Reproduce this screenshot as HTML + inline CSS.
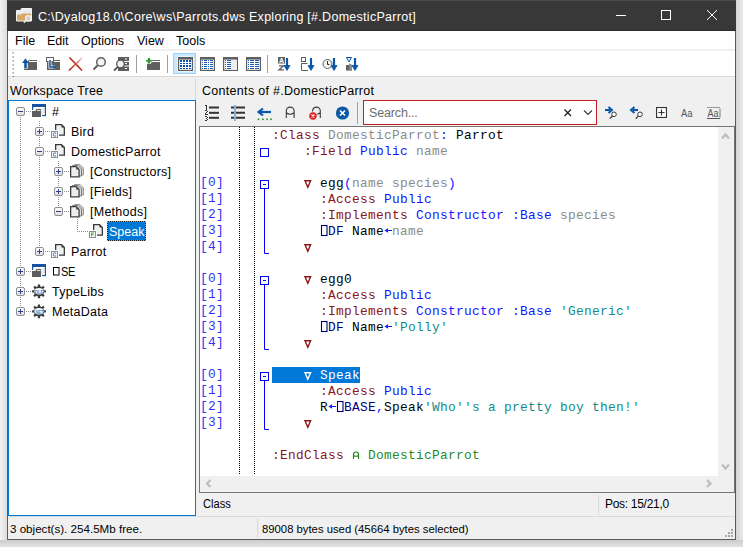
<!DOCTYPE html><html><head><meta charset="utf-8"><style>
*{margin:0;padding:0;box-sizing:border-box}
html,body{width:743px;height:547px;overflow:hidden}
body{position:relative;background:#ececec;font-family:"Liberation Sans",sans-serif;font-size:12.5px;color:#000}
.a{position:absolute}
.t{position:absolute;white-space:pre;line-height:14px;height:14px}
.m{position:absolute;white-space:pre;font-family:"Liberation Mono",monospace;font-size:12.8px;letter-spacing:0.32px;line-height:16px;height:16px}
.kw{color:#8b1515}.gy{color:#8a8a8a}.bl{color:#1414ff}.tl{color:#008080}.nv{color:#00007a}.gr{color:#1f8a1f}.bk{color:#000}
.q{display:inline-block;width:8px;height:16px;position:relative;vertical-align:top}
</style></head><body>
<div class="a" style="left:0;top:0;width:7px;height:547px;background:linear-gradient(to right,#f3f3f3,#dcdcdc)"></div>
<div class="a" style="left:736px;top:0;width:7px;height:547px;background:linear-gradient(to right,#d3d3d3,#e2e2e2 60%,#e8e8e8)"></div>
<div class="a" style="left:0;top:540px;width:743px;height:7px;background:linear-gradient(to bottom,#cbcbcb,#dadada 60%,#e2e2e2)"></div>
<div class="a" style="left:7px;top:0;width:729px;height:540px;background:#f0f0f0;border:1px solid #5a5a5a;border-top:none"></div>
<div class="a" style="left:7px;top:0;width:729px;height:31px;background:#383838;border-top:1px solid #4a4a4a;border-bottom:1px solid #2c2c2c"></div>
<div class="t" style="left:38px;top:10px;color:#fff;letter-spacing:0.28px">C:\Dyalog18.0\Core\ws\Parrots.dws Exploring [#.DomesticParrot]</div>
<div class="a" style="left:8px;top:31px;width:727px;height:18px;background:#fff"></div>
<div class="t" style="left:15px;top:34px">File</div>
<div class="t" style="left:47px;top:34px">Edit</div>
<div class="t" style="left:81px;top:34px">Options</div>
<div class="t" style="left:137px;top:34px">View</div>
<div class="t" style="left:176px;top:34px">Tools</div>
<div class="a" style="left:8px;top:51px;width:727px;height:25px;background:#fff"></div>
<div class="a" style="left:8px;top:76px;width:727px;height:1px;background:#d8d8d8"></div>
<div class="t" style="left:10px;top:84px;letter-spacing:0.17px">Workspace Tree</div>
<div class="t" style="left:202px;top:84px;letter-spacing:0.3px">Contents of #.DomesticParrot</div>
<div class="a" style="left:195px;top:79px;width:1px;height:21px;background:#d9d9d9"></div>
<div class="a" style="left:8px;top:100px;width:188px;height:416px;background:#fff;border:1px solid #0078d7"></div>
<div class="a" style="left:363px;top:100px;width:234px;height:25px;background:#fff;border:1px solid #c01f24"></div>
<div class="t" style="left:369px;top:106px;color:#6d6d6d;letter-spacing:-0.15px">Search...</div>
<div class="a" style="left:199px;top:126px;width:536px;height:367px;background:#fff;border:1px solid #767676"></div>
<div class="a" style="left:718px;top:127px;width:16px;height:365px;background:#f0f0f0"></div>
<div class="a" style="left:200px;top:476px;width:534px;height:16px;background:#f0f0f0"></div>
<div class="t" style="left:203px;top:497px;transform:scaleX(0.89);transform-origin:0 0">Class</div>
<div class="a" style="left:598px;top:495px;width:1px;height:20px;background:#d9d9d9"></div>
<div class="t" style="left:605px;top:497px;font-size:12px;letter-spacing:-0.3px">Pos: 15/21,0</div>
<div class="a" style="left:8px;top:516px;width:727px;height:1px;background:#dadada"></div>
<div class="a" style="left:257px;top:518px;width:1px;height:20px;background:#d9d9d9"></div>
<div class="t" style="left:10px;top:522px;font-size:11.6px">3 object(s). 254.5Mb free.</div>
<div class="t" style="left:262px;top:522px;font-size:11.3px">89008 bytes used (45664 bytes selected)</div>
<div class="a" style="left:272px;top:367px;width:88px;height:16px;background:#0078d7"></div>
<svg class="a" style="left:0;top:0" width="743" height="547" viewBox="0 0 743 547"><defs><linearGradient id="xg" gradientUnits="userSpaceOnUse" x1="69" y1="70.5" x2="82.5" y2="57.5"><stop offset="0" stop-color="#b3240e"/><stop offset="0.45" stop-color="#c04a35"/><stop offset="1" stop-color="#f3d9d4"/></linearGradient><linearGradient id="exg" x1="0" y1="0" x2="0" y2="1"><stop offset="0" stop-color="#fdfdfd"/><stop offset="1" stop-color="#dcdcdc"/></linearGradient></defs><path d="M239.5 127V475M254.5 127V475" stroke="#000" stroke-width="1" stroke-dasharray="1 1"/><rect x="260.5" y="148.5" width="8" height="8" fill="#fff" stroke="#0000ff" stroke-width="1"/><rect x="260.5" y="180.5" width="8" height="8" fill="#fff" stroke="#0000ff" stroke-width="1"/><path d="M263 184.5H266" stroke="#0000ff" stroke-width="1"/><path d="M264.5 189V253.5H269" fill="none" stroke="#0000ff" stroke-width="1"/><rect x="260.5" y="276.5" width="8" height="8" fill="#fff" stroke="#0000ff" stroke-width="1"/><path d="M263 280.5H266" stroke="#0000ff" stroke-width="1"/><path d="M264.5 285V349.5H269" fill="none" stroke="#0000ff" stroke-width="1"/><rect x="260.5" y="372.5" width="8" height="8" fill="#fff" stroke="#0000ff" stroke-width="1"/><path d="M263 376.5H266" stroke="#0000ff" stroke-width="1"/><path d="M264.5 381V429.5H269" fill="none" stroke="#0000ff" stroke-width="1"/><path d="M305 180.7H310.6L307.8 187.2Z" fill="none" stroke="#8b1515" stroke-width="1.4" stroke-linejoin="miter"/><rect x="321.5" y="225.5" width="5.5" height="10" fill="none" stroke="#00007a" stroke-width="1.1"/><path d="M385.5 230.5H392" stroke="#1414ff" stroke-width="1"/><path d="M384.5 230.5L388 228.3V232.7Z" fill="#1414ff"/><path d="M305 244.7H310.6L307.8 251.2Z" fill="none" stroke="#8b1515" stroke-width="1.4" stroke-linejoin="miter"/><path d="M305 276.7H310.6L307.8 283.2Z" fill="none" stroke="#8b1515" stroke-width="1.4" stroke-linejoin="miter"/><rect x="321.5" y="321.5" width="5.5" height="10" fill="none" stroke="#00007a" stroke-width="1.1"/><path d="M385.5 326.5H392" stroke="#1414ff" stroke-width="1"/><path d="M384.5 326.5L388 324.3V328.7Z" fill="#1414ff"/><path d="M305 340.7H310.6L307.8 347.2Z" fill="none" stroke="#8b1515" stroke-width="1.4" stroke-linejoin="miter"/><path d="M305 372.7H310.6L307.8 379.2Z" fill="none" stroke="#fff" stroke-width="1.4" stroke-linejoin="miter"/><path d="M329.5 406.5H336" stroke="#1414ff" stroke-width="1"/><path d="M328.5 406.5L332 404.3V408.7Z" fill="#1414ff"/><rect x="337.5" y="401.5" width="5.5" height="10" fill="none" stroke="#00007a" stroke-width="1.1"/><path d="M305 420.7H310.6L307.8 427.2Z" fill="none" stroke="#8b1515" stroke-width="1.4" stroke-linejoin="miter"/><path d="M353.5 459V454.5Q353.5 452 356 452Q358.5 452 358.5 454.5V459M353.5 455.5Q356 457 358.5 455.5" fill="none" stroke="#1f8a1f" stroke-width="1.2"/><path d="M20.5 117V307" stroke="#8c8c8c" stroke-width="1" stroke-dasharray="1 1"/><path d="M39.5 121V251" stroke="#8c8c8c" stroke-width="1" stroke-dasharray="1 1"/><path d="M58.5 161V211" stroke="#8c8c8c" stroke-width="1" stroke-dasharray="1 1"/><path d="M77.5 219V231" stroke="#8c8c8c" stroke-width="1" stroke-dasharray="1 1"/><path d="M26 111.5H32" stroke="#8c8c8c" stroke-width="1" stroke-dasharray="1 1"/><rect x="16.5" y="107.5" width="8" height="8" rx="1.5" fill="url(#exg)" stroke="#8f8f8f" stroke-width="1"/><path d="M18 111.5H23" stroke="#2c3f8f" stroke-width="1"/><rect x="33" y="107" width="12" height="8" fill="#fff"/><rect x="35" y="108" width="9" height="6" fill="#e9e9ee"/><rect x="32" y="104" width="14" height="3" fill="#1a50a0"/><rect x="32" y="104" width="1.2" height="6" fill="#1a50a0"/><rect x="44.8" y="104" width="1.2" height="12" fill="#1a50a0"/><rect x="42" y="115" width="4" height="1.1" fill="#1a50a0"/><path d="M32 117V111H35.5L36.5 109H41V117Z" fill="#5e5e5e" stroke="#fff" stroke-width="1.2" paint-order="stroke"/><path d="M37 110.5H40.5" stroke="#e0e0e0" stroke-width="1"/><path d="M45 131.5H51" stroke="#8c8c8c" stroke-width="1" stroke-dasharray="1 1"/><rect x="35.5" y="127.5" width="8" height="8" rx="1.5" fill="url(#exg)" stroke="#8f8f8f" stroke-width="1"/><path d="M37 131.5H42" stroke="#2c3f8f" stroke-width="1"/><path d="M39.5 129V134" stroke="#2c3f8f" stroke-width="1"/><path d="M55.65 124.65H61.5L64.35 127.5V135.15H55.65Z" fill="#efeff1" stroke="#383838" stroke-width="1.3" stroke-linejoin="miter"/><path d="M61.5 124.65V127.5H64.35Z" fill="#383838"/><rect x="50" y="130" width="9" height="9" fill="#fff"/><rect x="51.5" y="131.5" width="6" height="6" fill="#f4f4f4" stroke="#8f8f8f" stroke-width="1"/><path d="M56 133H54.3Q53.3 133 53.3 134.5Q53.3 136 54.3 136H56" fill="none" stroke="#3a78c8" stroke-width="1"/><path d="M45 151.5H51" stroke="#8c8c8c" stroke-width="1" stroke-dasharray="1 1"/><rect x="35.5" y="147.5" width="8" height="8" rx="1.5" fill="url(#exg)" stroke="#8f8f8f" stroke-width="1"/><path d="M37 151.5H42" stroke="#2c3f8f" stroke-width="1"/><path d="M55.65 144.65H61.5L64.35 147.5V155.15H55.65Z" fill="#efeff1" stroke="#383838" stroke-width="1.3" stroke-linejoin="miter"/><path d="M61.5 144.65V147.5H64.35Z" fill="#383838"/><rect x="50" y="150" width="9" height="9" fill="#fff"/><rect x="51.5" y="151.5" width="6" height="6" fill="#f4f4f4" stroke="#8f8f8f" stroke-width="1"/><path d="M56 153H54.3Q53.3 153 53.3 154.5Q53.3 156 54.3 156H56" fill="none" stroke="#3a78c8" stroke-width="1"/><path d="M64 171.5H70" stroke="#8c8c8c" stroke-width="1" stroke-dasharray="1 1"/><rect x="54.5" y="167.5" width="8" height="8" rx="1.5" fill="url(#exg)" stroke="#8f8f8f" stroke-width="1"/><path d="M56 171.5H61" stroke="#2c3f8f" stroke-width="1"/><path d="M58.5 169V174" stroke="#2c3f8f" stroke-width="1"/><path d="M74.5 164.5H80L83.5 168V175H74.5Z" fill="#d0d0d0" stroke="#9a9a9a" stroke-width="1"/><path d="M72.5 165.5H78L81.5 169V176H72.5Z" fill="#dedede" stroke="#7a7a7a" stroke-width="1"/><path d="M70.65 166.65H76.2L79.05 169.5V176.95H70.65Z" fill="#ededef" stroke="#404040" stroke-width="1.3" stroke-linejoin="miter"/><path d="M76.2 166.65V169.5H79.05Z" fill="#404040"/><path d="M64 191.5H70" stroke="#8c8c8c" stroke-width="1" stroke-dasharray="1 1"/><rect x="54.5" y="187.5" width="8" height="8" rx="1.5" fill="url(#exg)" stroke="#8f8f8f" stroke-width="1"/><path d="M56 191.5H61" stroke="#2c3f8f" stroke-width="1"/><path d="M58.5 189V194" stroke="#2c3f8f" stroke-width="1"/><path d="M74.5 184.5H80L83.5 188V195H74.5Z" fill="#d0d0d0" stroke="#9a9a9a" stroke-width="1"/><path d="M72.5 185.5H78L81.5 189V196H72.5Z" fill="#dedede" stroke="#7a7a7a" stroke-width="1"/><path d="M70.65 186.65H76.2L79.05 189.5V196.95H70.65Z" fill="#ededef" stroke="#404040" stroke-width="1.3" stroke-linejoin="miter"/><path d="M76.2 186.65V189.5H79.05Z" fill="#404040"/><path d="M64 211.5H70" stroke="#8c8c8c" stroke-width="1" stroke-dasharray="1 1"/><rect x="54.5" y="207.5" width="8" height="8" rx="1.5" fill="url(#exg)" stroke="#8f8f8f" stroke-width="1"/><path d="M56 211.5H61" stroke="#2c3f8f" stroke-width="1"/><path d="M74.5 204.5H80L83.5 208V215H74.5Z" fill="#d0d0d0" stroke="#9a9a9a" stroke-width="1"/><path d="M72.5 205.5H78L81.5 209V216H72.5Z" fill="#dedede" stroke="#7a7a7a" stroke-width="1"/><path d="M70.65 206.65H76.2L79.05 209.5V216.95H70.65Z" fill="#ededef" stroke="#404040" stroke-width="1.3" stroke-linejoin="miter"/><path d="M76.2 206.65V209.5H79.05Z" fill="#404040"/><path d="M77 231.5H88" stroke="#8c8c8c" stroke-width="1" stroke-dasharray="1 1"/><path d="M93.65 224.65H99.5L102.35 227.5V235.15H93.65Z" fill="#efeff1" stroke="#383838" stroke-width="1.3" stroke-linejoin="miter"/><path d="M99.5 224.65V227.5H102.35Z" fill="#383838"/><rect x="88" y="230" width="9" height="9" fill="#fff"/><rect x="89.5" y="231.5" width="6" height="6" fill="#f4f4f4" stroke="#8f8f8f" stroke-width="1"/><path d="M94 233H91.5V236.3M91.5 234.6H93.5" fill="none" stroke="#4caf50" stroke-width="1"/><path d="M45 251.5H51" stroke="#8c8c8c" stroke-width="1" stroke-dasharray="1 1"/><rect x="35.5" y="247.5" width="8" height="8" rx="1.5" fill="url(#exg)" stroke="#8f8f8f" stroke-width="1"/><path d="M37 251.5H42" stroke="#2c3f8f" stroke-width="1"/><path d="M39.5 249V254" stroke="#2c3f8f" stroke-width="1"/><path d="M55.65 244.65H61.5L64.35 247.5V255.15H55.65Z" fill="#efeff1" stroke="#383838" stroke-width="1.3" stroke-linejoin="miter"/><path d="M61.5 244.65V247.5H64.35Z" fill="#383838"/><rect x="50" y="250" width="9" height="9" fill="#fff"/><rect x="51.5" y="251.5" width="6" height="6" fill="#f4f4f4" stroke="#8f8f8f" stroke-width="1"/><path d="M56 253H54.3Q53.3 253 53.3 254.5Q53.3 256 54.3 256H56" fill="none" stroke="#3a78c8" stroke-width="1"/><path d="M26 271.5H32" stroke="#8c8c8c" stroke-width="1" stroke-dasharray="1 1"/><rect x="16.5" y="267.5" width="8" height="8" rx="1.5" fill="url(#exg)" stroke="#8f8f8f" stroke-width="1"/><path d="M18 271.5H23" stroke="#2c3f8f" stroke-width="1"/><path d="M20.5 269V274" stroke="#2c3f8f" stroke-width="1"/><rect x="33" y="267" width="12" height="8" fill="#fff"/><rect x="35" y="268" width="9" height="6" fill="#e9e9ee"/><rect x="32" y="264" width="14" height="3" fill="#1a50a0"/><rect x="32" y="264" width="1.2" height="6" fill="#1a50a0"/><rect x="44.8" y="264" width="1.2" height="12" fill="#1a50a0"/><rect x="42" y="275" width="4" height="1.1" fill="#1a50a0"/><path d="M32 277V271H35.5L36.5 269H41V277Z" fill="#5e5e5e" stroke="#fff" stroke-width="1.2" paint-order="stroke"/><path d="M37 270.5H40.5" stroke="#e0e0e0" stroke-width="1"/><rect x="53.5" y="267.5" width="5.5" height="7.5" fill="none" stroke="#000" stroke-width="1"/><path d="M26 291.5H32" stroke="#8c8c8c" stroke-width="1" stroke-dasharray="1 1"/><rect x="16.5" y="287.5" width="8" height="8" rx="1.5" fill="url(#exg)" stroke="#8f8f8f" stroke-width="1"/><path d="M18 291.5H23" stroke="#2c3f8f" stroke-width="1"/><path d="M20.5 289V294" stroke="#2c3f8f" stroke-width="1"/><path d="M37.09 286.68L37.83 286.23L37.90 284.39L40.10 284.39L40.17 286.23L40.91 286.68L41.76 286.89L43.11 285.64L44.66 287.19L43.41 288.54L43.62 289.39L44.07 290.13L45.91 290.20L45.91 292.40L44.07 292.47L43.62 293.21L43.41 294.06L44.66 295.41L43.11 296.96L41.76 295.71L40.91 295.92L40.17 296.37L40.10 298.21L37.90 298.21L37.83 296.37L37.09 295.92L36.24 295.71L34.89 296.96L33.34 295.41L34.59 294.06L34.38 293.21L33.93 292.47L32.09 292.40L32.09 290.20L33.93 290.13L34.38 289.39L34.59 288.54L33.34 287.19L34.89 285.64L36.24 286.89Z" fill="#3a3a3a"/><ellipse cx="39" cy="291.3" rx="4.6" ry="3.2" fill="#f4f7fb"/><text x="39" y="293.5" font-family="Liberation Sans" font-size="5.5" font-weight="bold" fill="#3d7fd0" text-anchor="middle" textLength="8.5" lengthAdjust="spacingAndGlyphs">OLE</text><path d="M26 311.5H32" stroke="#8c8c8c" stroke-width="1" stroke-dasharray="1 1"/><rect x="16.5" y="307.5" width="8" height="8" rx="1.5" fill="url(#exg)" stroke="#8f8f8f" stroke-width="1"/><path d="M18 311.5H23" stroke="#2c3f8f" stroke-width="1"/><path d="M20.5 309V314" stroke="#2c3f8f" stroke-width="1"/><path d="M37.09 306.68L37.83 306.23L37.90 304.39L40.10 304.39L40.17 306.23L40.91 306.68L41.76 306.89L43.11 305.64L44.66 307.19L43.41 308.54L43.62 309.39L44.07 310.13L45.91 310.20L45.91 312.40L44.07 312.47L43.62 313.21L43.41 314.06L44.66 315.41L43.11 316.96L41.76 315.71L40.91 315.92L40.17 316.37L40.10 318.21L37.90 318.21L37.83 316.37L37.09 315.92L36.24 315.71L34.89 316.96L33.34 315.41L34.59 314.06L34.38 313.21L33.93 312.47L32.09 312.40L32.09 310.20L33.93 310.13L34.38 309.39L34.59 308.54L33.34 307.19L34.89 305.64L36.24 306.89Z" fill="#3a3a3a"/><ellipse cx="39" cy="311.3" rx="4.6" ry="3.2" fill="#f4f7fb"/><text x="39" y="313.5" font-family="Liberation Sans" font-size="5.5" font-weight="bold" fill="#3d7fd0" text-anchor="middle" textLength="8.5" lengthAdjust="spacingAndGlyphs">.NET</text><path d="M16.5 10.5H20.5L21.5 8.5H31.5V21H16.5Z" fill="#ebebf2" stroke="#f4f4f4" stroke-width="1"/><path d="M17 14.5H21L22 13.5H31V20.5H17Z" fill="#d8a963"/><circle cx="28.3" cy="18.3" r="2.7" fill="#d0d0d0" stroke="#f6f6f6" stroke-width="1.2"/><path d="M26.3 20.3L23.8 22.8" stroke="#e8e8e8" stroke-width="1.4"/><path d="M616 15.5H626" stroke="#fff" stroke-width="1"/><rect x="661.5" y="10.5" width="9" height="9" fill="none" stroke="#fff" stroke-width="1"/><path d="M707 10L717 20M717 10L707 20" stroke="#fff" stroke-width="1"/><rect x="12" y="52" width="2" height="2" fill="#d0d0d0"/><rect x="13" y="52" width="1" height="1" fill="#a8a8a8"/><rect x="12" y="56" width="2" height="2" fill="#d0d0d0"/><rect x="13" y="56" width="1" height="1" fill="#a8a8a8"/><rect x="12" y="60" width="2" height="2" fill="#d0d0d0"/><rect x="13" y="60" width="1" height="1" fill="#a8a8a8"/><rect x="12" y="64" width="2" height="2" fill="#d0d0d0"/><rect x="13" y="64" width="1" height="1" fill="#a8a8a8"/><rect x="12" y="68" width="2" height="2" fill="#d0d0d0"/><rect x="13" y="68" width="1" height="1" fill="#a8a8a8"/><rect x="12" y="72" width="2" height="2" fill="#d0d0d0"/><rect x="13" y="72" width="1" height="1" fill="#a8a8a8"/><rect x="13" y="76" width="1" height="1" fill="#555"/><rect x="173.5" y="53.5" width="22" height="20" fill="#cce8ff" stroke="#99d1ff" stroke-width="1"/><rect x="136" y="55" width="1" height="18" fill="#a0a0a0"/><rect x="167" y="55" width="1" height="18" fill="#a0a0a0"/><rect x="267" y="55" width="1" height="18" fill="#a0a0a0"/><path d="M24 70V61H28L29 60H37V70Z" fill="#5f5f5f"/><path d="M29 61.5H37" stroke="#fff" stroke-width="1"/><path d="M25.5 68.5V61" stroke="#fff" stroke-width="4.5"/><path d="M25.5 68V62" stroke="#0a56a8" stroke-width="2.6"/><path d="M22.2 63L25.5 58.2L28.8 63Z" fill="#0a56a8"/><path d="M47 70V61H51L52 60H60V70Z" fill="#5f5f5f"/><path d="M52 61.5H60" stroke="#fff" stroke-width="1"/><rect x="46.5" y="57.5" width="7" height="4" fill="#fff" stroke="#5f5f5f" stroke-width="1"/><path d="M50 60V67H55" fill="none" stroke="#fff" stroke-width="3"/><path d="M50 60V67H54" fill="none" stroke="#0a56a8" stroke-width="1.5"/><path d="M53.5 65L56 67L53.5 69Z" fill="#0a56a8"/><path d="M69.5 57.5L82 70.5" stroke="#b3240e" stroke-width="1.5"/><path d="M82.5 57.5L69 70.5" stroke="url(#xg)" stroke-width="1.5"/><circle cx="101" cy="62" r="4.3" fill="#f4f4f4" stroke="#606060" stroke-width="1.5"/><path d="M97.8 65.2L93.5 69.5" stroke="#606060" stroke-width="2"/><rect x="118" y="57" width="11" height="14" fill="#5f5f5f"/><path d="M118 61.5H129" stroke="#fff" stroke-width="1"/><path d="M118 66H129" stroke="#fff" stroke-width="1"/><path d="M125 59H127" stroke="#fff" stroke-width="1"/><path d="M125 63.5H127" stroke="#fff" stroke-width="1"/><path d="M125 68.5H127" stroke="#fff" stroke-width="1"/><circle cx="120.5" cy="64" r="3.8" fill="#f2f2f2" stroke="#555" stroke-width="1.3"/><path d="M117.8 66.8L114 70.5" stroke="#555" stroke-width="1.8"/><path d="M147 70V61H151L152 60H160V70Z" fill="#5f5f5f"/><path d="M152 61.5H160" stroke="#fff" stroke-width="1"/><path d="M149 57.5V64M145.8 60.8H152.2" stroke="#fff" stroke-width="3.5"/><path d="M149 58V63.5M146.2 60.8H151.8" stroke="#2c9b2c" stroke-width="2"/><rect x="177.5" y="56.5" width="16" height="15" fill="#fff"/><rect x="178.6" y="57.6" width="13.8" height="12.8" fill="#fff" stroke="#5f5f5f" stroke-width="1.2"/><rect x="178" y="57" width="15" height="2.6" fill="#5f5f5f"/><rect x="180" y="60" width="2" height="2" fill="#0a4ea8"/><rect x="183" y="60" width="2" height="2" fill="#0a4ea8"/><rect x="186" y="60" width="2" height="2" fill="#0a4ea8"/><rect x="189" y="60" width="2" height="2" fill="#0a4ea8"/><rect x="180" y="63" width="2" height="1" fill="#0a4ea8"/><rect x="183" y="63" width="2" height="1" fill="#0a4ea8"/><rect x="186" y="63" width="2" height="1" fill="#0a4ea8"/><rect x="189" y="63" width="2" height="1" fill="#0a4ea8"/><rect x="180" y="65" width="2" height="2" fill="#0a4ea8"/><rect x="183" y="65" width="2" height="2" fill="#0a4ea8"/><rect x="186" y="65" width="2" height="2" fill="#0a4ea8"/><rect x="189" y="65" width="2" height="2" fill="#0a4ea8"/><rect x="180" y="68" width="2" height="1" fill="#0a4ea8"/><rect x="183" y="68" width="2" height="1" fill="#0a4ea8"/><rect x="186" y="68" width="2" height="1" fill="#0a4ea8"/><rect x="189" y="68" width="2" height="1" fill="#0a4ea8"/><rect x="199.5" y="56.5" width="16" height="15" fill="#fff"/><rect x="200.6" y="57.6" width="13.8" height="12.8" fill="#fff" stroke="#5f5f5f" stroke-width="1.2"/><rect x="200" y="57" width="15" height="2.6" fill="#5f5f5f"/><rect x="202" y="60" width="1" height="1" fill="#1a5fb0"/><rect x="204" y="60" width="3" height="1" fill="#1a5fb0"/><rect x="208" y="60" width="1" height="1" fill="#1a5fb0"/><rect x="210" y="60" width="3" height="1" fill="#1a5fb0"/><rect x="202" y="62" width="1" height="1" fill="#1a5fb0"/><rect x="204" y="62" width="3" height="1" fill="#1a5fb0"/><rect x="208" y="62" width="1" height="1" fill="#1a5fb0"/><rect x="210" y="62" width="3" height="1" fill="#1a5fb0"/><rect x="202" y="64" width="1" height="1" fill="#1a5fb0"/><rect x="204" y="64" width="3" height="1" fill="#1a5fb0"/><rect x="208" y="64" width="1" height="1" fill="#1a5fb0"/><rect x="210" y="64" width="3" height="1" fill="#1a5fb0"/><rect x="202" y="66" width="1" height="1" fill="#1a5fb0"/><rect x="204" y="66" width="3" height="1" fill="#1a5fb0"/><rect x="208" y="66" width="1" height="1" fill="#1a5fb0"/><rect x="210" y="66" width="3" height="1" fill="#1a5fb0"/><rect x="202" y="68" width="1" height="1" fill="#1a5fb0"/><rect x="204" y="68" width="3" height="1" fill="#1a5fb0"/><rect x="208" y="68" width="1" height="1" fill="#1a5fb0"/><rect x="210" y="68" width="3" height="1" fill="#1a5fb0"/><rect x="222.5" y="56.5" width="16" height="15" fill="#fff"/><rect x="223.6" y="57.6" width="13.8" height="12.8" fill="#fff" stroke="#5f5f5f" stroke-width="1.2"/><rect x="223" y="57" width="15" height="2.6" fill="#5f5f5f"/><rect x="231" y="60" width="6" height="10" fill="#eeeeee"/><rect x="225" y="60" width="1" height="1" fill="#1a5fb0"/><rect x="227" y="60" width="4" height="1" fill="#1a5fb0"/><rect x="225" y="62" width="1" height="1" fill="#1a5fb0"/><rect x="227" y="62" width="4" height="1" fill="#1a5fb0"/><rect x="225" y="64" width="1" height="1" fill="#1a5fb0"/><rect x="227" y="64" width="4" height="1" fill="#1a5fb0"/><rect x="225" y="66" width="1" height="1" fill="#1a5fb0"/><rect x="227" y="66" width="4" height="1" fill="#1a5fb0"/><rect x="225" y="68" width="1" height="1" fill="#1a5fb0"/><rect x="227" y="68" width="4" height="1" fill="#1a5fb0"/><rect x="245.5" y="56.5" width="16" height="15" fill="#fff"/><rect x="246.6" y="57.6" width="13.8" height="12.8" fill="#fff" stroke="#5f5f5f" stroke-width="1.2"/><rect x="246" y="57" width="15" height="2.6" fill="#5f5f5f"/><rect x="248" y="60" width="1" height="1" fill="#1a5fb0"/><rect x="250" y="60" width="4" height="1" fill="#1a5fb0"/><rect x="255" y="60" width="4" height="1" fill="#1a5fb0"/><rect x="248" y="62" width="1" height="1" fill="#1a5fb0"/><rect x="250" y="62" width="4" height="1" fill="#1a5fb0"/><rect x="255" y="62" width="4" height="1" fill="#1a5fb0"/><rect x="248" y="64" width="1" height="1" fill="#1a5fb0"/><rect x="250" y="64" width="4" height="1" fill="#1a5fb0"/><rect x="255" y="64" width="4" height="1" fill="#1a5fb0"/><rect x="248" y="66" width="1" height="1" fill="#1a5fb0"/><rect x="250" y="66" width="4" height="1" fill="#1a5fb0"/><rect x="255" y="66" width="4" height="1" fill="#1a5fb0"/><rect x="248" y="68" width="1" height="1" fill="#1a5fb0"/><rect x="250" y="68" width="4" height="1" fill="#1a5fb0"/><rect x="255" y="68" width="4" height="1" fill="#1a5fb0"/><rect x="278" y="57" width="7" height="6.5" fill="#5f5f5f"/><text x="281.5" y="63" font-family="Liberation Sans" font-size="7" font-weight="bold" fill="#fff" text-anchor="middle">A</text><path d="M279 65.8H283.5L279 69.8H284" fill="none" stroke="#5f5f5f" stroke-width="1.3"/><path d="M287 58V67" stroke="#0a56a8" stroke-width="2.2"/><path d="M284 65.5L287 70.5L290 65.5Z" fill="#0a56a8" stroke="#0a56a8" stroke-width="0.8" stroke-linejoin="round"/><rect x="301.5" y="57.5" width="4" height="4" fill="none" stroke="#5f5f5f" stroke-width="1"/><path d="M307.5 63.5H301.5V70.5H308" fill="none" stroke="#5f5f5f" stroke-width="1"/><path d="M311 58V67" stroke="#0a56a8" stroke-width="2.2"/><path d="M308 65.5L311 70.5L314 65.5Z" fill="#0a56a8" stroke="#0a56a8" stroke-width="0.8" stroke-linejoin="round"/><circle cx="327.5" cy="64" r="4.5" fill="#f4f4f4" stroke="#5f5f5f" stroke-width="1"/><path d="M327.5 61V64.5H329.5" fill="none" stroke="#333" stroke-width="1"/><path d="M334 58V67" stroke="#0a56a8" stroke-width="2.2"/><path d="M331 65.5L334 70.5L337 65.5Z" fill="#0a56a8" stroke="#0a56a8" stroke-width="0.8" stroke-linejoin="round"/><path d="M346.5 57.5H351.5L349 62Z" fill="none" stroke="#0a56a8" stroke-width="1"/><rect x="346" y="65" width="6" height="5.5" fill="#5f5f5f"/><path d="M349 63L352 65V70.5H349Z" fill="#8a8a8a"/><path d="M355 58V67" stroke="#0a56a8" stroke-width="2.2"/><path d="M352 65.5L355 70.5L358 65.5Z" fill="#0a56a8" stroke="#0a56a8" stroke-width="0.8" stroke-linejoin="round"/><rect x="205" y="105" width="1" height="1" fill="#333"/><rect x="206" y="105" width="1" height="5" fill="#333"/><rect x="205" y="110" width="2" height="1" fill="#333"/><rect x="207" y="111" width="1" height="1" fill="#333"/><rect x="206" y="112" width="1" height="1" fill="#333"/><rect x="205" y="113" width="1" height="1" fill="#333"/><rect x="205" y="114" width="3" height="1" fill="#333"/><rect x="205" y="116" width="2" height="1" fill="#333"/><rect x="207" y="117" width="1" height="1" fill="#333"/><rect x="206" y="118" width="1" height="1" fill="#333"/><rect x="207" y="119" width="1" height="1" fill="#333"/><rect x="205" y="120" width="2" height="1" fill="#333"/><path d="M209 107.5H219" stroke="#333" stroke-width="2"/><path d="M231 107.5H234M236 107.5H245" stroke="#333" stroke-width="2"/><path d="M209 112.8H219" stroke="#333" stroke-width="2"/><path d="M231 112.8H234M236 112.8H245" stroke="#333" stroke-width="2"/><path d="M209 117.8H219" stroke="#333" stroke-width="2"/><path d="M231 117.8H234M236 117.8H245" stroke="#333" stroke-width="2"/><path d="M235 105V121" stroke="#6a9bd0" stroke-width="1.5"/><path d="M271 112H260" stroke="#0a56a8" stroke-width="2.2"/><path d="M263 108.5L258.5 112L263 115.5" fill="none" stroke="#0a56a8" stroke-width="2.2"/><rect x="257.7" y="118.5" width="1.6" height="1.6" fill="#1e8f1e"/><rect x="262.2" y="118.5" width="1.6" height="1.6" fill="#1e8f1e"/><rect x="266.2" y="118.5" width="1.6" height="1.6" fill="#1e8f1e"/><rect x="270.2" y="118.5" width="1.6" height="1.6" fill="#1e8f1e"/><path d="M286.3 118V111A3.9 3.9 0 0 1 294.1 111V118M286.3 112.8Q290.2 115.8 294.1 112.8" fill="none" stroke="#3a3a3a" stroke-width="1.1"/><path d="M312.5 118V111A3.9 3.9 0 0 1 320.3 111V118M312.5 112.8Q316.4 115.8 320.3 112.8" fill="none" stroke="#3a3a3a" stroke-width="1.1"/><circle cx="313" cy="116" r="4.2" fill="#e01c1c" stroke="#fff" stroke-width="0.8"/><path d="M311.5 114.5L314.5 117.5M314.5 114.5L311.5 117.5" stroke="#fff" stroke-width="1.2"/><circle cx="342.5" cy="113" r="6.6" fill="#0b5aa8"/><path d="M340 110.5L345 115.5M345 110.5L340 115.5" stroke="#fff" stroke-width="1.6"/><rect x="357" y="102" width="1" height="22" fill="#a0a0a0"/><path d="M564.5 109.5L571 116M571 109.5L564.5 116" stroke="#111" stroke-width="1.1"/><path d="M584 110.5L588 114.5L592 110.5" fill="none" stroke="#3a3a3a" stroke-width="1.15"/><path d="M605 110H610" stroke="#0a56a8" stroke-width="2"/><path d="M608.5 107L612 110L608.5 113" fill="none" stroke="#0a56a8" stroke-width="2"/><circle cx="614" cy="114.3" r="2.3" fill="#fff" stroke="#3a3a3a" stroke-width="1"/><path d="M612.4 116L609.8 118.6" stroke="#3a3a3a" stroke-width="1.3"/><path d="M633 110H638" stroke="#0a56a8" stroke-width="2"/><path d="M634.5 107L631 110L634.5 113" fill="none" stroke="#0a56a8" stroke-width="2"/><circle cx="640" cy="114.3" r="2.3" fill="#fff" stroke="#3a3a3a" stroke-width="1"/><path d="M638.4 116L635.8 118.6" stroke="#3a3a3a" stroke-width="1.3"/><rect x="655" y="106" width="13" height="13" fill="#fff"/><rect x="656.5" y="107.5" width="10" height="10" fill="#fff" stroke="#333" stroke-width="1.2"/><path d="M661.5 109.5V115.5M658.5 112.5H664.5" stroke="#333" stroke-width="1.2"/><text x="681" y="117" font-family="Liberation Sans" font-size="10" fill="#555" textLength="11.5" lengthAdjust="spacingAndGlyphs">Aa</text><text x="707.5" y="117" font-family="Liberation Sans" font-size="10" fill="#555" textLength="11" lengthAdjust="spacingAndGlyphs">Aa</text><path d="M707 107.5H720" stroke="#9a9a9a" stroke-width="1"/><path d="M707 118.5H720" stroke="#555" stroke-width="1"/><path d="M720 108.5V117.5" stroke="#777" stroke-width="1"/><path d="M722 138.5L725.5 134.5L729 138.5" fill="none" stroke="#bcbcbc" stroke-width="2.2"/><path d="M722 464.5L725.5 468.5L729 464.5" fill="none" stroke="#bcbcbc" stroke-width="2.2"/><path d="M210.5 480L207 483.5L210.5 487" fill="none" stroke="#bcbcbc" stroke-width="2.2"/><path d="M707 480L710.5 483.5L707 487" fill="none" stroke="#bcbcbc" stroke-width="2.2"/><rect x="731" y="529" width="2" height="2" fill="#a8a8a8"/><rect x="728" y="532" width="2" height="2" fill="#a8a8a8"/><rect x="731" y="532" width="2" height="2" fill="#a8a8a8"/><rect x="725" y="535" width="2" height="2" fill="#a8a8a8"/><rect x="728" y="535" width="2" height="2" fill="#a8a8a8"/><rect x="731" y="535" width="2" height="2" fill="#a8a8a8"/></svg>
<div class="m" style="left:272px;top:128px;color:#8b1515">:Class </div>
<div class="m" style="left:328px;top:128px;color:#8a8a8a">DomesticParrot</div>
<div class="m" style="left:440px;top:128px;color:#1414ff">:</div>
<div class="m" style="left:448px;top:128px;color:#000"> Parrot</div>
<div class="m" style="left:304px;top:144px;color:#8b1515">:Field </div>
<div class="m" style="left:360px;top:144px;color:#1414ff">Public </div>
<div class="m" style="left:416px;top:144px;color:#8a8a8a">name</div>
<div class="m" style="left:320px;top:176px;color:#000">egg</div>
<div class="m" style="left:344px;top:176px;color:#1414ff">(</div>
<div class="m" style="left:352px;top:176px;color:#8a8a8a">name species</div>
<div class="m" style="left:448px;top:176px;color:#1414ff">)</div>
<div class="m" style="left:320px;top:192px;color:#8b1515">:Access </div>
<div class="m" style="left:384px;top:192px;color:#1414ff">Public</div>
<div class="m" style="left:320px;top:208px;color:#8b1515">:Implements </div>
<div class="m" style="left:416px;top:208px;color:#1414ff">Constructor </div>
<div class="m" style="left:512px;top:208px;color:#1414ff">:Base </div>
<div class="m" style="left:560px;top:208px;color:#8a8a8a">species</div>
<div class="m" style="left:328px;top:224px;color:#00007a">DF </div>
<div class="m" style="left:352px;top:224px;color:#000">Name</div>
<div class="m" style="left:392px;top:224px;color:#8a8a8a">name</div>
<div class="m" style="left:320px;top:272px;color:#000">egg0</div>
<div class="m" style="left:320px;top:288px;color:#8b1515">:Access </div>
<div class="m" style="left:384px;top:288px;color:#1414ff">Public</div>
<div class="m" style="left:320px;top:304px;color:#8b1515">:Implements </div>
<div class="m" style="left:416px;top:304px;color:#1414ff">Constructor </div>
<div class="m" style="left:512px;top:304px;color:#1414ff">:Base </div>
<div class="m" style="left:560px;top:304px;color:#128c8c">'Generic'</div>
<div class="m" style="left:328px;top:320px;color:#00007a">DF </div>
<div class="m" style="left:352px;top:320px;color:#000">Name</div>
<div class="m" style="left:392px;top:320px;color:#128c8c">'Polly'</div>
<div class="m" style="left:320px;top:368px;color:#fff">Speak</div>
<div class="m" style="left:320px;top:384px;color:#8b1515">:Access </div>
<div class="m" style="left:384px;top:384px;color:#1414ff">Public</div>
<div class="m" style="left:320px;top:400px;color:#000">R</div>
<div class="m" style="left:344px;top:400px;color:#00007a">BASE</div>
<div class="m" style="left:376px;top:400px;color:#1414ff">,</div>
<div class="m" style="left:384px;top:400px;color:#000">Speak</div>
<div class="m" style="left:424px;top:400px;color:#128c8c">'Who''s a pretty boy then!'</div>
<div class="m" style="left:272px;top:448px;color:#8b1515">:EndClass </div>
<div class="m" style="left:360px;top:448px;color:#1f8a1f"> DomesticParrot</div>
<div class="m" style="left:200px;top:175px;color:#3232f5">[0]</div>
<div class="m" style="left:200px;top:191px;color:#3232f5">[1]</div>
<div class="m" style="left:200px;top:207px;color:#3232f5">[2]</div>
<div class="m" style="left:200px;top:223px;color:#3232f5">[3]</div>
<div class="m" style="left:200px;top:239px;color:#3232f5">[4]</div>
<div class="m" style="left:200px;top:271px;color:#3232f5">[0]</div>
<div class="m" style="left:200px;top:287px;color:#3232f5">[1]</div>
<div class="m" style="left:200px;top:303px;color:#3232f5">[2]</div>
<div class="m" style="left:200px;top:319px;color:#3232f5">[3]</div>
<div class="m" style="left:200px;top:335px;color:#3232f5">[4]</div>
<div class="m" style="left:200px;top:367px;color:#3232f5">[0]</div>
<div class="m" style="left:200px;top:383px;color:#3232f5">[1]</div>
<div class="m" style="left:200px;top:399px;color:#3232f5">[2]</div>
<div class="m" style="left:200px;top:415px;color:#3232f5">[3]</div>
<div class="t" style="left:52px;top:105px;letter-spacing:0.25px">#</div>
<div class="t" style="left:71px;top:125px;letter-spacing:0.25px">Bird</div>
<div class="t" style="left:71px;top:145px;letter-spacing:0.25px">DomesticParrot</div>
<div class="t" style="left:90px;top:165px;letter-spacing:0.25px">[Constructors]</div>
<div class="t" style="left:90px;top:185px;letter-spacing:0.25px">[Fields]</div>
<div class="t" style="left:90px;top:205px;letter-spacing:0.25px">[Methods]</div>
<div class="a" style="left:107px;top:221px;width:39px;height:20px;background:#0078d7;border:1px solid #1a1a1a;outline:1px dotted #ff8f1f;outline-offset:-1px"></div>
<div class="t" style="left:109px;top:225px;color:#fff;letter-spacing:0px">Speak</div>
<div class="t" style="left:71px;top:245px;letter-spacing:0.25px">Parrot</div>
<div class="t" style="left:61px;top:265px;letter-spacing:-0.5px;transform:scaleX(0.88);transform-origin:0 0">SE</div>
<div class="t" style="left:52px;top:285px;letter-spacing:0.25px">TypeLibs</div>
<div class="t" style="left:52px;top:305px;letter-spacing:0.25px">MetaData</div>
</body></html>
